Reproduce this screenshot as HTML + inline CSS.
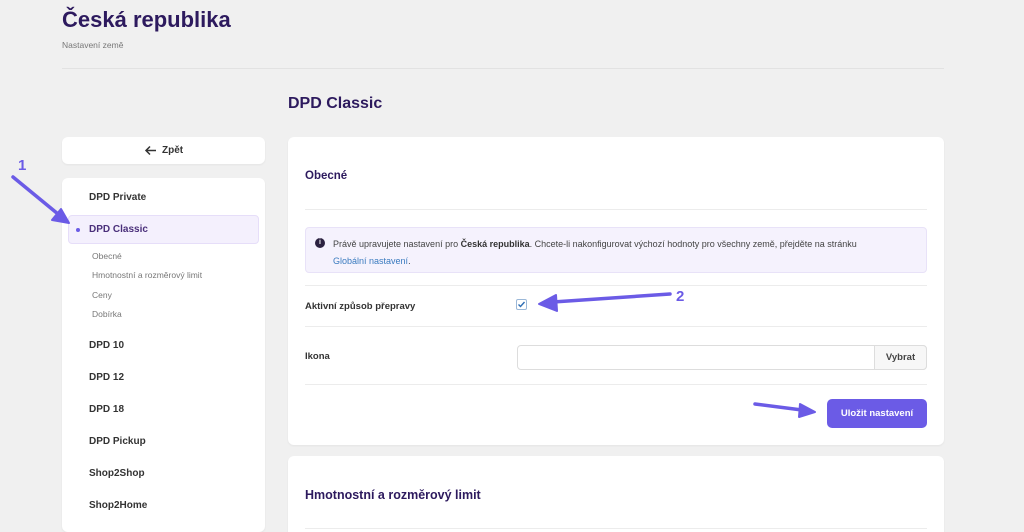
<!DOCTYPE html>
<html style="width:1024px;height:532px;overflow:hidden"><head><meta charset="utf-8"><style>
*{box-sizing:border-box;margin:0;padding:0}
body{width:1024px;height:532px;overflow:hidden;background:#f0f0f0;font-family:"Liberation Sans",sans-serif;position:relative;color:#333}
.a{position:absolute}
.card{position:absolute;background:#fff;border-radius:6px;box-shadow:0 1px 2px rgba(0,0,0,.05)}
.nav{position:absolute;left:89px;font-size:10px;font-weight:bold;color:#333}
.sub{position:absolute;left:92px;font-size:8.5px;color:#777}
.line{position:absolute;left:305px;width:622px;height:1px;background:#ececec}
</style></head><body>
<div class="a" style="left:62px;top:7px;font-size:22px;font-weight:bold;color:#2d1a5e">Česká republika</div>
<div class="a" style="left:62px;top:40px;font-size:8.5px;color:#777">Nastavení země</div>
<div class="a" style="left:62px;top:68px;width:882px;height:1px;background:#e2e2e2"></div>
<div class="a" style="left:288px;top:95px;font-size:16px;font-weight:bold;color:#2d1a5e">DPD Classic</div>

<div class="card" style="left:62px;top:137px;width:203px;height:27px"></div>
<svg class="a" style="left:144px;top:145px" width="13" height="11"><path d="M12 5.5H2M6 1.5L2 5.5L6 9.5" fill="none" stroke="#333" stroke-width="1.5"/></svg>
<div class="a" style="left:162px;top:145px;font-size:10px;font-weight:bold;color:#333">Zpět</div>

<div class="card" style="left:62px;top:178px;width:203px;height:354px"></div>
<div class="nav" style="top:192px">DPD Private</div>
<div class="a" style="left:68px;top:215px;width:191px;height:29px;background:#f4f0fd;border:1px solid #e6def9;border-radius:4px"></div>
<div class="a" style="left:76px;top:228px;width:4px;height:4px;border-radius:50%;background:#6b5be6"></div>
<div class="nav" style="top:224px;color:#4a2f7a">DPD Classic</div>
<div class="sub" style="top:251px">Obecné</div>
<div class="sub" style="top:270px">Hmotnostní a rozměrový limit</div>
<div class="sub" style="top:290px">Ceny</div>
<div class="sub" style="top:309px">Dobírka</div>
<div class="nav" style="top:340px">DPD 10</div>
<div class="nav" style="top:372px">DPD 12</div>
<div class="nav" style="top:404px">DPD 18</div>
<div class="nav" style="top:436px">DPD Pickup</div>
<div class="nav" style="top:468px">Shop2Shop</div>
<div class="nav" style="top:500px">Shop2Home</div>

<div class="card" style="left:288px;top:137px;width:656px;height:308px"></div>
<div class="a" style="left:305px;top:170px;font-size:11.5px;font-weight:bold;color:#2d1a5e">Obecné</div>
<div class="line" style="top:209px"></div>
<div class="a" style="left:305px;top:227px;width:622px;height:46px;background:#f5f2fd;border:1px solid #e8e2f8;border-radius:4px"></div>
<div class="a" style="left:315px;top:238px;width:10px;height:10px;border-radius:50%;background:#2b2140;color:#fff;font-size:7px;font-weight:bold;text-align:center;line-height:10px">i</div>
<div class="a" style="left:333px;top:236px;font-size:9px;color:#444;line-height:17px;width:590px">Právě upravujete nastavení pro <b style="color:#333">Česká republika</b>. Chcete-li nakonfigurovat výchozí hodnoty pro všechny země, přejděte na stránku<br><span style="color:#3a7bbf">Globální nastavení</span>.</div>
<div class="line" style="top:285px"></div>
<div class="a" style="left:305px;top:301px;font-size:9.5px;font-weight:bold;color:#333">Aktivní způsob přepravy</div>
<div class="a" style="left:516px;top:299px;width:11px;height:11px;border:1px solid #9bb8d8;border-radius:2px;background:#fff"></div>
<svg class="a" style="left:516px;top:299px" width="11" height="11"><path d="M2.5 5.5L4.5 7.5L8.5 3" fill="none" stroke="#2f6fb5" stroke-width="1.4"/></svg>
<div class="line" style="top:326px"></div>
<div class="a" style="left:305px;top:351px;font-size:9.5px;font-weight:bold;color:#333">Ikona</div>
<div class="a" style="left:517px;top:345px;width:410px;height:25px;border:1px solid #ddd;border-radius:4px"></div>
<div class="a" style="left:874px;top:345px;width:53px;height:25px;border:1px solid #ddd;border-radius:0 4px 4px 0;background:#f7f7f7;font-size:9.5px;font-weight:bold;text-align:center;line-height:23px;color:#444">Vybrat</div>
<div class="line" style="top:384px"></div>
<div class="a" style="left:827px;top:399px;width:100px;height:29px;background:#6b5be6;border-radius:5px;color:#fff;font-size:9.5px;font-weight:bold;text-align:center;line-height:29px">Uložit nastavení</div>

<div class="card" style="left:288px;top:456px;width:656px;height:90px"></div>
<div class="a" style="left:305px;top:488px;font-size:12.5px;font-weight:bold;color:#2d1a5e">Hmotnostní a rozměrový limit</div>
<div class="line" style="top:528px"></div>

<svg class="a" style="left:0;top:0" width="1024" height="532">
<g fill="#6b5be6" stroke="#6b5be6" stroke-linecap="round">
<line x1="13" y1="177" x2="58" y2="214" stroke-width="3.5"/>
<polygon points="69,223 52,220 61,209" stroke-width="2" stroke-linejoin="round"/>
<line x1="670" y1="294" x2="553" y2="302" stroke-width="3.5"/>
<polygon points="539,304 556,295 557,311" stroke-width="2" stroke-linejoin="round"/>
<line x1="755" y1="404" x2="802" y2="410" stroke-width="3.5"/>
<polygon points="815,412 800,404 799,417" stroke-width="2" stroke-linejoin="round"/>
</g>
<text x="18" y="170" font-family="Liberation Sans" font-weight="bold" font-size="15" fill="#6b5be6">1</text>
<text x="676" y="301" font-family="Liberation Sans" font-weight="bold" font-size="15" fill="#6b5be6">2</text>
</svg>
</body></html>
